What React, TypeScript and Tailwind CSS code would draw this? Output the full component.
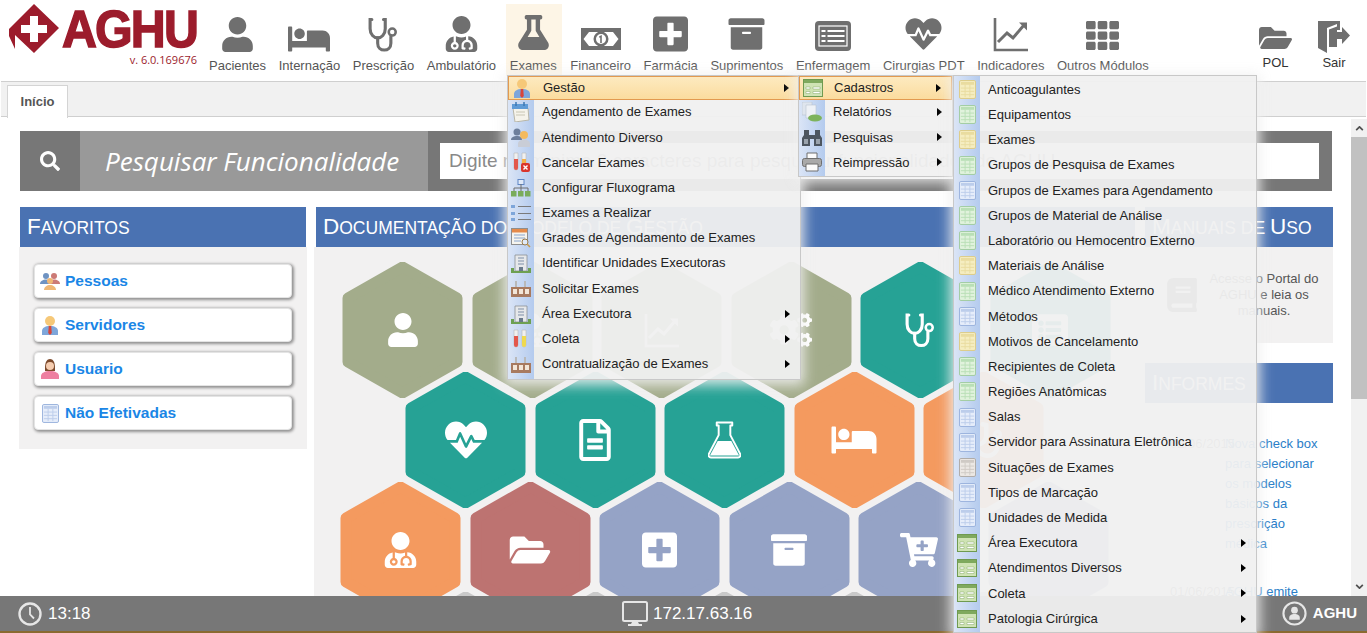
import React from 'react';
import {
  FaUser, FaBed, FaUserMd, FaFlask, FaPlusSquare, FaArchive, FaListAlt, FaHeartbeat, FaTh,
  FaFolderOpen, FaRegFileAlt, FaCartPlus, FaCogs, FaSearch, FaBook, FaStethoscope,
} from 'react-icons/fa';

const GREY = '#6f6f6f';

// ---------- desenhos ----------
const Stethoscope = ({ className = '', color = GREY }: { className?: string; color?: string }) => (
  <svg viewBox="0 0 34 36" className={className} fill="none" stroke={color} strokeWidth="3.2" strokeLinecap="round">
    <path d="M5 2.500H3.200V12c0 6 4 9.500 7.800 9.500s7.800-3.500 7.800-9.500V2.500H17" />
    <path d="M11 21.500V27c0 4.500 3.200 7 6.800 7s6.800-2.500 6.800-7v-7" />
    <circle cx="26" cy="15.500" r="3.600" strokeWidth="2.600" />
  </svg>
);

const Money = ({ className = '' }: { className?: string }) => (
  <svg viewBox="0 0 40 22" className={className}>
    <path fillRule="evenodd" fill={GREY} d="M0 0h40v22H0zM8 4 2.500 11 8 18h24l5.500-7L32 4z" />
    <path fillRule="evenodd" fill={GREY} d="M20 3.500a7.500 7.500 0 1 1 0 15 7.500 7.500 0 0 1 0-15zM20 6a5 5 0 1 0 0 10 5 5 0 0 0 0-10z" />
    <path fill={GREY} d="M18.200 8.200 20.800 7v8h-1.600V9.400l-1 .4z" />
  </svg>
);

const LineChart = ({ className = '', color = GREY }: { className?: string; color?: string }) => (
  <svg viewBox="0 0 36 36" className={className} fill="none" stroke={color}>
    <path d="M2 2v32h33" strokeWidth="2.600" />
    <path d="M5 26l9-9 6 5 11-13" strokeWidth="3" />
    <path d="M26 6.500h8v8z" fill={color} stroke="none" />
  </svg>
);

const ListBox = ({ className = '' }: { className?: string }) => (
  <svg viewBox="0 0 36 30" className={className}>
    <rect x="0" y="0" width="36" height="30" rx="4" fill={GREY} />
    <rect x="4" y="5" width="28" height="20" fill="none" stroke="#fff" strokeWidth="1.200" />
    <path d="M6.500 9h4v2h-4zM6.500 14h4v2h-4zM6.500 19h4v2h-4z" fill="#fff" />
    <path d="M12.500 9h17v2h-17zM12.500 14h17v2h-17zM12.500 19h17v2h-17z" fill="#fff" />
  </svg>
);

const FlaskOutline = ({ className = '' }: { className?: string }) => (
  <svg viewBox="0 0 34 38" className={className}>
    <path d="M9 1h16v3h-2v10l10 19c1 2 0 4-2 4H3c-2 0-3-2-2-4l10-19V4H9z" fill="none" stroke="#fff" strokeWidth="2" strokeLinejoin="round" />
    <path d="M10 20h14l8 15H2z" fill="#fff" />
  </svg>
);

const Door = ({ className = '' }: { className?: string }) => (
  <svg viewBox="0 0 32 32" className={className} fill={GREY}>
    <path d="M0 0h22v9h-3V3L9 7v25L0 27z" />
    <path d="M11 8.500 19 5.500V11h5V6l8 8.500-8 8.500v-5h-5v8h-8z" />
    <path d="M19 18h3v5h-3z" fill="#fff" />
  </svg>
);

const Clock = () => (
  <svg viewBox="0 0 24 26" className="w-6 h-[26px]" fill="none" stroke="#e6e6e6">
    <circle cx="12" cy="13" r="10.500" strokeWidth="2.400" />
    <path d="M12 6v7.500l4 4" strokeWidth="1.800" />
  </svg>
);

const Monitor = () => (
  <svg viewBox="0 0 26 26" className="w-[26px] h-[26px]">
    <rect x="1" y="1" width="24" height="19" rx="1.500" fill="none" stroke="#e6e6e6" strokeWidth="2" />
    <path d="M10 21h6l1 2H9zM6 23h14v2H6z" fill="#e6e6e6" />
  </svg>
);

const UserRound = () => (
  <svg viewBox="0 0 26 26" className="w-[25px] h-[25px]">
    <circle cx="13" cy="13" r="11.500" fill="none" stroke="#e6e6e6" strokeWidth="2.200" />
    <circle cx="13" cy="9.500" r="3.500" fill="#e6e6e6" />
    <path d="M7.500 19.500v-2c0-2.800 2.500-4 5.500-4s5.500 1.200 5.500 4v2z" fill="#e6e6e6" />
  </svg>
);

// Ícones coloridos do menu
const Table = ({ tone }: { tone: 'yellow' | 'green' | 'blue' | 'grey' }) => {
  const c = {
    yellow: ['#dccb85', '#f5edc0', '#e9dc9f'],
    green: ['#9fcb9f', '#e0f2dc', '#b9dfb6'],
    blue: ['#98b0dc', '#e6edfa', '#bccdeb'],
    grey: ['#aca8a4', '#ece8e4', '#cfcac5'],
  }[tone];
  return (
    <svg viewBox="0 0 18 20" className="w-[17px] h-[19px]">
      <rect x="0.500" y="0.500" width="17" height="19" rx="1.500" fill={c[1]} stroke={c[0]} />
      <rect x="2" y="2" width="14" height="3" fill={c[2]} />
      <path d="M2 8.500h14M2 12h14M2 15.500h14M6.500 5v13M11.500 5v13" stroke={c[2]} strokeWidth="1" />
    </svg>
  );
};

const Form = () => (
  <svg viewBox="0 0 20 18" className="w-5 h-[18px]">
    <rect x="0.500" y="0.500" width="19" height="17" fill="#cfe3b4" stroke="#6f9a50" />
    <rect x="1" y="1" width="18" height="3" fill="#7fa95e" />
    <path d="M3 8h4v2H3zM3 12.500h4v2H3zM10 8h7v2h-7zM10 12.500h7v2h-7z" fill="#fff" stroke="#6f9a50" strokeWidth="0.400" />
  </svg>
);

const Servidor = () => (
  <svg viewBox="0 0 18 20" className="w-[18px] h-5">
    <path d="M1 20v-4c0-3 3-5 8-5s8 2 8 5v4z" fill="#7ea6da" />
    <path d="M7.800 11h2.400l.6 7-1.800 2-1.800-2z" fill="#d8453a" />
    <circle cx="9" cy="6" r="5" fill="#f6c878" />
  </svg>
);

const Calendario = () => (
  <svg viewBox="0 0 20 20" className="w-5 h-5">
    <path d="M2 6h15l1 12-14 2z" fill="#f5f3ea" stroke="#b8b6a8" />
    <path d="M1 2h16v5H1z" fill="#5f9bd6" />
    <path d="M5 0v4M13 0v4" stroke="#3d78b2" strokeWidth="1.500" />
    <path d="M5 10h9M5 13h9" stroke="#c9c6b4" />
  </svg>
);

const Atendimento = () => (
  <svg viewBox="0 0 20 20" className="w-5 h-5">
    <circle cx="6" cy="5" r="3.500" fill="#6d7f9c" />
    <path d="M0 13c0-3 3-4 6-4s5 1 5 4z" fill="#6d7f9c" />
    <circle cx="13" cy="8" r="4" fill="#f3ba5e" />
    <path d="M7 20v-3c0-3 3-4.500 6-4.500s6 1.500 6 4.500v3z" fill="#c9cdd6" />
  </svg>
);

const Tubos = ({ x = false }: { x?: boolean }) => (
  <svg viewBox="0 0 20 20" className="w-5 h-5">
    <path d="M3 1h4v15a2 2 0 0 1-4 0z" fill="#f0f0f0" stroke="#b9b9b9" strokeWidth="0.600" />
    <path d="M3 7h4v9a2 2 0 0 1-4 0z" fill="#e2574c" />
    <path d="M11 1h4v15a2 2 0 0 1-4 0z" fill="#f0f0f0" stroke="#b9b9b9" strokeWidth="0.600" />
    <path d="M11 7h4v9a2 2 0 0 1-4 0z" fill={x ? '#f4b04a' : '#efd94f'} />
    {x && <rect x="10" y="11" width="9" height="9" rx="2" fill="#d9352c" />}
    {x && <path d="M12.500 13.500l4 4M16.500 13.500l-4 4" stroke="#fff" strokeWidth="1.400" />}
  </svg>
);

const Fluxo = () => (
  <svg viewBox="0 0 20 18" className="w-5 h-[18px]">
    <rect x="7" y="0.500" width="6" height="5" fill="#dfe9f8" stroke="#5f86c4" />
    <path d="M10 5v4M3 12V9h14v3M10 9v3" fill="none" stroke="#6e6e6e" />
    <path d="M0 12h5.500v5.500H0zM7 12h5.500v5.500H7zM14 12h5.500v5.500H14z" fill="#79ac5c" />
  </svg>
);

const Lista = () => (
  <svg viewBox="0 0 20 18" className="w-5 h-[18px]">
    <path d="M0 1h4v3H0zM0 8h4v3H0zM0 14h4v3H0z" fill="#7ea6da" />
    <path d="M7 2.500h13M7 9.500h13M7 15.500h13" stroke="#7a7a7a" strokeWidth="1.200" />
  </svg>
);

const Grade = () => (
  <svg viewBox="0 0 20 20" className="w-5 h-5">
    <rect x="0.500" y="0.500" width="16" height="16" fill="#f6f4ee" stroke="#8e8e8e" />
    <rect x="1" y="1" width="15" height="3.500" fill="#e58a4a" />
    <path d="M3 7h11M3 10h11M3 13h7" stroke="#8aa6cf" />
    <circle cx="14" cy="14" r="3" fill="#dfeaf8" stroke="#9a7b4a" />
    <path d="M16 16l3 3" stroke="#c59a4f" strokeWidth="1.600" />
  </svg>
);

const Predio = () => (
  <svg viewBox="0 0 20 20" className="w-5 h-5">
    <path d="M4 2h12v16H4z" fill="#e6e8ea" stroke="#8b8f94" strokeWidth="0.800" />
    <path d="M7 5h6M7 8h6M7 11h6" stroke="#7f8fa8" />
    <path d="M8 14h4v4H8z" fill="#6a7a8c" />
    <path d="M0 18h20v2H0zM0 15h3v3H0zM17 15h3v3h-3z" fill="#6ea052" />
  </svg>
);

const Fabrica = () => (
  <svg viewBox="0 0 20 20" className="w-5 h-5">
    <path d="M0 9h20v10H0z" fill="#a87a5f" />
    <path d="M2 11h4v5H2zM8 11h4v5H8zM14 11h4v5h-4z" fill="#f3e6d8" />
    <path d="M4 3h2v6H4zM13 3h2v6h-2z" fill="#b9b9b9" />
  </svg>
);

const Relatorio = () => (
  <svg viewBox="0 0 20 20" className="w-5 h-5">
    <path d="M0 0h10v13H0z" fill="#dfe5ee" stroke="#b9c2d0" strokeWidth="0.600" />
    <path d="M4 3h10v13H4z" fill="#eef1f6" stroke="#b9c2d0" strokeWidth="0.600" />
    <ellipse cx="13" cy="16" rx="7" ry="3.500" fill="#7db35c" />
  </svg>
);

const Binoculo = () => (
  <svg viewBox="0 0 20 18" className="w-5 h-[18px]">
    <path d="M2 2h5v5h6V2h5v5l2 3v8h-8v-7H8v7H0v-8l2-3z" fill="#4d5660" />
    <path d="M2 11h4v5H2zM14 11h4v5h-4z" fill="#9aa3ad" />
  </svg>
);

const Impressora = () => (
  <svg viewBox="0 0 20 20" className="w-5 h-5">
    <path d="M5 1h10v6H5z" fill="#fbfbfb" stroke="#6f6f6f" />
    <rect x="0.500" y="6.500" width="19" height="8" rx="2" fill="#a9a9a9" stroke="#6f6f6f" />
    <path d="M4 12h12v7H4z" fill="#fbfbfb" stroke="#6f6f6f" />
  </svg>
);

const Pessoas = () => (
  <svg viewBox="0 0 20 18" className="w-5 h-[18px]">
    <circle cx="6" cy="4" r="3" fill="#6f93c2" />
    <path d="M0 12c0-3 3-4.500 6-4.500S11 9 11 12z" fill="#6f93c2" />
    <circle cx="14" cy="4" r="3" fill="#cc7a76" />
    <path d="M9 12c0-3 2-4.500 5-4.500s6 1.500 6 4.500z" fill="#cc7a76" />
    <circle cx="10" cy="9" r="3" fill="#f0b774" />
    <path d="M4 18c0-3 3-5 6-5s6 2 6 5z" fill="#f0b774" />
  </svg>
);

const Usuaria = () => (
  <svg viewBox="0 0 18 20" className="w-[18px] h-5">
    <path d="M4 9c0-6 2-9 5-9s5 3 5 9v3H4z" fill="#7d4a2c" />
    <circle cx="9" cy="7" r="4" fill="#f6cdb0" />
    <path d="M0 20v-3c0-3 4-5 9-5s9 2 9 5v3z" fill="#ee7fa0" />
  </svg>
);

// Formas
const Hex = ({ color, icon }: { color: string; icon?: React.ReactNode }) => (
  <div className="relative w-[121px] h-[136px] shrink-0 flex items-center justify-center text-white">
    <svg viewBox="0 0 121 136" className="absolute inset-0 w-full h-full">
      <path d="M60.500 5 115 36v64l-54.500 31L6 100V36z" fill={color} stroke={color} strokeWidth="11" strokeLinejoin="round" />
    </svg>
    <span className="relative">{icon}</span>
  </div>
);

const OLIVE = '#a3ac8b';
const TEAL = '#26a295';
const ORANGE = '#f49a5f';
const ROSE = '#bd7371';
const BLUE = '#95a3c6';

// Versalete com a proporção do original (a do navegador fica pequena demais)
const SectionHeader = ({ title }: { title: string }) => {
  const parts = title.split(/(?=[A-Z])/);
  return (
    <div className="h-10 bg-[#4a72b2] flex items-baseline pt-[7px] px-[7px] text-white whitespace-pre overflow-hidden">
      {parts.map((p, i) => (
        <React.Fragment key={i}>
          <span className="text-[22.500px] leading-[26px]">{p[0]}</span>
          <span className="text-[17.500px] leading-[26px] uppercase">{p.slice(1)}</span>
        </React.Fragment>
      ))}
    </div>
  );
};

const favoritos = [
  { label: 'Pessoas', icon: <Pessoas /> },
  { label: 'Servidores', icon: <Servidor /> },
  { label: 'Usuario', icon: <Usuaria /> },
  { label: 'Não Efetivadas', icon: <Table tone="blue" /> },
];

const navItems = [
  { label: 'Pacientes', icon: <FaUser className="w-[33px] h-[35px]" /> },
  { label: 'Internação', icon: <FaBed className="w-[42px] h-[34px] -mb-[4px]" /> },
  { label: 'Prescrição', icon: <Stethoscope className="w-[33px] h-[35px]" /> },
  { label: 'Ambulatório', icon: <FaUserMd className="w-[33px] h-9" /> },
  { label: 'Exames', icon: <FaFlask className="w-[33px] h-[35px] mb-[2px]" />, active: true },
  { label: 'Financeiro', icon: <Money className="w-10 h-[22px] mb-[2px]" /> },
  { label: 'Farmácia', icon: <FaPlusSquare className="w-[35px] h-[40px] -mb-[2px]" /> },
  { label: 'Suprimentos', icon: <FaArchive className="w-[39px] h-[36px]" /> },
  { label: 'Enfermagem', icon: <ListBox className="w-9 h-[30px] mb-[1px]" /> },
  { label: 'Cirurgias PDT', icon: <FaHeartbeat className="w-[37px] h-[36px]" /> },
  { label: 'Indicadores', icon: <LineChart className="w-9 h-[36px]" /> },
  { label: 'Outros Módulos', icon: <FaTh className="w-[33px] h-[37px] -mb-[2px]" /> },
];

type Row = { label: string; icon: React.ReactNode; sub?: boolean; on?: boolean };

const menuExames: Row[] = [
  { label: 'Gestão', icon: <Servidor />, sub: true, on: true },
  { label: 'Agendamento de Exames', icon: <Calendario /> },
  { label: 'Atendimento Diverso', icon: <Atendimento /> },
  { label: 'Cancelar Exames', icon: <Tubos x /> },
  { label: 'Configurar Fluxograma', icon: <Fluxo /> },
  { label: 'Exames a Realizar', icon: <Lista /> },
  { label: 'Grades de Agendamento de Exames', icon: <Grade /> },
  { label: 'Identificar Unidades Executoras', icon: <Predio /> },
  { label: 'Solicitar Exames', icon: <Fabrica /> },
  { label: 'Área Executora', icon: <Predio />, sub: true },
  { label: 'Coleta', icon: <Tubos />, sub: true },
  { label: 'Contratualização de Exames', icon: <Fabrica />, sub: true },
];

const menuGestao: Row[] = [
  { label: 'Cadastros', icon: <Form />, sub: true, on: true },
  { label: 'Relatórios', icon: <Relatorio />, sub: true },
  { label: 'Pesquisas', icon: <Binoculo />, sub: true },
  { label: 'Reimpressão', icon: <Impressora />, sub: true },
];

const menuCadastros: Row[] = [
  { label: 'Anticoagulantes', icon: <Table tone="yellow" /> },
  { label: 'Equipamentos', icon: <Table tone="green" /> },
  { label: 'Exames', icon: <Table tone="yellow" /> },
  { label: 'Grupos de Pesquisa de Exames', icon: <Table tone="green" /> },
  { label: 'Grupos de Exames para Agendamento', icon: <Table tone="blue" /> },
  { label: 'Grupos de Material de Análise', icon: <Table tone="green" /> },
  { label: 'Laboratório ou Hemocentro Externo', icon: <Table tone="green" /> },
  { label: 'Materiais de Análise', icon: <Table tone="yellow" /> },
  { label: 'Médico Atendimento Externo', icon: <Table tone="green" /> },
  { label: 'Métodos', icon: <Table tone="blue" /> },
  { label: 'Motivos de Cancelamento', icon: <Table tone="yellow" /> },
  { label: 'Recipientes de Coleta', icon: <Table tone="green" /> },
  { label: 'Regiões Anatômicas', icon: <Table tone="green" /> },
  { label: 'Salas', icon: <Table tone="blue" /> },
  { label: 'Servidor para Assinatura Eletrônica', icon: <Table tone="blue" /> },
  { label: 'Situações de Exames', icon: <Table tone="grey" /> },
  { label: 'Tipos de Marcação', icon: <Table tone="blue" /> },
  { label: 'Unidades de Medida', icon: <Table tone="blue" /> },
  { label: 'Área Executora', icon: <Form />, sub: true },
  { label: 'Atendimentos Diversos', icon: <Form />, sub: true },
  { label: 'Coleta', icon: <Form />, sub: true },
  { label: 'Patologia Cirúrgica', icon: <Form />, sub: true },
];

const MenuRow = ({ row }: { row: Row }) => (
  <div
    className={`relative flex items-center text-[13px] text-[#222] whitespace-nowrap ${row.on ? 'h-[23.500px] border border-[#e29a50] bg-gradient-to-b from-[#fdeac0] to-[#fbdc9e]' : 'h-[25.200px]'}`}
  >
    <span className="w-[26px] shrink-0 flex items-center justify-center">{row.icon}</span>
    <span className="ml-2 flex-1">{row.label}</span>
    {row.sub && <span className="mr-[10px] w-0 h-0 border-y-[4.500px] border-y-transparent border-l-[5px] border-l-black" />}
  </div>
);

const Menu = ({ rows, className }: { rows: Row[]; className: string }) => (
  <div className={`absolute top-[75px] border border-[#c8c8c8] bg-[#f0f0f0]/[.95] shadow-[0_2px_12px_3px_rgba(240,240,240,0.9)] ${className}`}>
    <div className="absolute left-0 top-0 bottom-0 w-[26px] bg-gradient-to-r from-[#dbe5f6] to-[#b4cbee]" />
    <div className="relative">
      {rows.map((r) => (
        <MenuRow key={r.label} row={r} />
      ))}
    </div>
  </div>
);

export default function App() {
  return (
    <div className="relative h-screen w-full overflow-hidden bg-white flex flex-col font-['Liberation_Sans',Arial,sans-serif]">
      {/* Cabeçalho */}
      <header className="h-[81px] shrink-0 flex items-start">
        <div className="w-[209px] shrink-0 pl-[9px] pt-[4px]">
          <div className="flex items-center">
            <svg viewBox="0 0 50 50" className="w-[50px] h-[50px] shrink-0">
              <path fillRule="evenodd" fill="#9c1c2c" d="M25 0 50 24 25 49 6 31v14L0 32V25zM21 12v9h-9v8h9v9h8v-9h9v-8h-9v-9z" />
            </svg>
            <span className="ml-[3px] text-[52px] leading-[50px] font-bold text-[#9c1c2c] tracking-[-2px] origin-left scale-x-[0.93] [-webkit-text-stroke:1.500px_#9c1c2c]">AGHU</span>
          </div>
          <div className="mt-[-1px] pr-[12px] text-right text-[11px] leading-[14px] text-[#9c1c2c] font-['Open_Sans',sans-serif]">v. 6.0.169676</div>
        </div>
        <nav className="flex-1 flex gap-[12.600px] text-[13px] text-[#555]">
          {navItems.map((n) => (
            <div key={n.label} className={`relative flex flex-col items-center ${n.active ? 'min-w-[49px]' : ''}`}>
              {n.active && <div className="absolute -left-[3px] -right-[4px] top-[4px] h-[72px] bg-[#fdf5e6]" />}
              <div className="relative h-[52px] flex items-end justify-center" style={{ color: GREY }}>{n.icon}</div>
              <span className="relative mt-[6px] leading-[16px] whitespace-nowrap">{n.label}</span>
            </div>
          ))}
        </nav>
        <div className="flex text-[13px] text-[#333] pr-[17px] gap-[26px]">
          <div className="w-[33px] flex flex-col items-center">
            <div className="h-[53px] flex items-end" style={{ color: GREY }}><FaFolderOpen className="w-[33px] h-[30px]" /></div>
            <span className="mt-[2px] leading-4">POL</span>
          </div>
          <div className="w-8 flex flex-col items-center">
            <div className="h-[53px] flex items-end"><Door className="w-8 h-8" /></div>
            <span className="mt-[2px] leading-4">Sair</span>
          </div>
        </div>
      </header>

      {/* Abas */}
      <div className="h-[36px] shrink-0 mx-px bg-[#f1f1f1] border-y border-[#cfcfcf] px-[6px] pt-[3px] flex">
        <div className="h-[33px] w-[61px] bg-white border border-b-0 border-[#d4d4d4] flex items-center justify-center text-[13px] font-bold text-[#555]">Início</div>
      </div>

      {/* Conteúdo */}
      <main className="flex-1 min-h-0 flex">
        <div className="flex-1 min-w-0 overflow-hidden pl-5 pr-[19px] pt-[14px]">
          <div className="h-[60px] flex bg-[#777]">
            <div className="w-[60px] flex items-center justify-center text-white"><FaSearch className="w-5 h-5" /></div>
            <div className="w-[348px] bg-[#999] flex items-center pl-[25px] text-white italic text-[26px] font-['Open_Sans',sans-serif] whitespace-nowrap">Pesquisar Funcionalidade</div>
            <div className="flex-1 pl-[12px] pr-[13px] py-3">
              <div className="h-9 bg-white flex items-center pl-[9px] text-[19px] text-[#888] whitespace-nowrap overflow-hidden">Digite no mínimo 3 caracteres para pesquisar funcionalidades do AGHU</div>
            </div>
          </div>

          <div className="mt-4 flex gap-[10px]">
            <section className="w-[286px] shrink-0 h-fit">
              <SectionHeader title="Favoritos" />
              <div className="-mx-px bg-[#f2f1f1] pt-[17px] pb-[19px] px-[15px] flex flex-col gap-[10px]">
                {favoritos.map((f) => (
                  <div key={f.label} className="h-[34px] rounded-[4px] bg-white border border-[#e4e4e4] shadow-[1px_1px_3px_1px_rgba(0,0,0,0.4)] flex items-center pl-[5px] gap-[5px] text-[15.500px] font-bold text-[#1a86e6]">
                    <span className="w-5 flex justify-center">{f.icon}</span>
                    <span>{f.label}</span>
                  </div>
                ))}
              </div>
            </section>

            <section className="w-[819px] shrink-0">
              <SectionHeader title="Documentação do Modelo de Gestão" />
              <div className="-ml-[2px] bg-[#f2f1f1] h-[360px] pt-[15px] pl-[28px] overflow-hidden">
                <div className="flex gap-[8.500px]">
                  <Hex color={OLIVE} icon={<FaUser className="w-[32px] h-[34px]" />} />
                  <Hex color={OLIVE} icon={<FaUserMd className="w-[32px] h-[34px]" />} />
                  <Hex color={OLIVE} icon={<LineChart className="w-9 h-9" color="#fff" />} />
                  <Hex color={OLIVE} icon={<FaCogs className="w-[42px] h-[36px]" />} />
                  <Hex color={TEAL} icon={<Stethoscope className="w-[33px] h-[36px]" color="#fff" />} />
                  <Hex color={TEAL} icon={<FaListAlt className="w-9 h-9" />} />
                </div>
                <div className="flex gap-[8.500px] -mt-[26px] ml-[63px]">
                  <Hex color={TEAL} icon={<FaHeartbeat className="w-[42px] h-[42px]" />} />
                  <Hex color={TEAL} icon={<FaRegFileAlt className="w-[36px] h-[42px]" />} />
                  <Hex color={TEAL} icon={<FlaskOutline className="w-[33px] h-[38px]" />} />
                  <Hex color={ORANGE} icon={<FaBed className="w-[46px] h-[36px]" />} />
                  <Hex color={ORANGE} icon={<FaStethoscope className="w-9 h-9" />} />
                </div>
                <div className="flex gap-[8.500px] -mt-[26px] -ml-[2px]">
                  <Hex color={ORANGE} icon={<FaUserMd className="w-[33px] h-[36px]" />} />
                  <Hex color={ROSE} icon={<FaFolderOpen className="w-[44px] h-[36px]" />} />
                  <Hex color={BLUE} icon={<FaPlusSquare className="w-[35px] h-[40px]" />} />
                  <Hex color={BLUE} icon={<FaArchive className="w-[38px] h-[36px]" />} />
                  <Hex color={BLUE} icon={<FaCartPlus className="w-[38px] h-[34px]" />} />
                  <Hex color={BLUE} />
                </div>
                <div className="flex gap-[8.500px] -mt-[26px] ml-[63px]">
                  {[0, 1, 2, 3, 4].map((i) => <Hex key={i} color="#c9c9c9" />)}
                </div>
              </div>
            </section>

            <aside className="w-[188px] shrink-0">
              <SectionHeader title="Manuais de Uso" />
              <div className="h-[96px] bg-[#f2f1f1] flex items-center pl-[20px] pr-[12px] text-[13px] text-[#555] leading-4">
                <FaBook className="w-[34px] h-[34px] shrink-0 text-[#666]" />
                <p className="ml-[8px] text-center">Acesse o Portal do AGHU e leia os manuais.</p>
              </div>
              <div className="mt-[20px]"><SectionHeader title="Informes" /></div>
              <div className="pt-[31px] pl-[25px] text-[13px] leading-[20px] text-[#777]">
                <div className="flex">
                  <span className="w-[55px] shrink-0 whitespace-nowrap">02/06/2015</span>
                  <a className="w-[96px] text-[#2a7ec8]">Nova check box para selecionar os modelos básicos da prescrição médica</a>
                </div>
                <div className="flex mt-[28px]">
                  <span className="w-[55px] shrink-0 whitespace-nowrap">01/06/2015</span>
                  <a className="text-[#2a7ec8] whitespace-nowrap">AGHU emite</a>
                </div>
              </div>
            </aside>
          </div>
        </div>

        {/* Barra de rolagem */}
        <div className="w-4 shrink-0 mt-[2px] bg-[#f1f1f1] flex flex-col items-center">
          <svg viewBox="0 0 10 6" className="w-[9px] h-[5px] mt-[7px] mb-[6px]"><path d="M1 5l4-4 4 4" fill="none" stroke="#505050" strokeWidth="2" /></svg>
          <div className="w-full h-[262px] bg-[#c1c1c1]" />
          <div className="flex-1" />
          <svg viewBox="0 0 10 6" className="w-[9px] h-[5px] mb-[7px]"><path d="M1 1l4 4 4-4" fill="none" stroke="#505050" strokeWidth="2" /></svg>
        </div>
      </main>

      {/* Rodapé */}
      <footer className="h-[37px] shrink-0 bg-[#777] border-b-2 border-[#8a6a30] flex items-center text-white text-[17px] pr-[10px]">
        <div className="w-[604px] shrink-0 flex items-center gap-[6px] pl-[18px]"><Clock />13:18</div>
        <div className="flex items-center gap-[5px] ml-[18px]"><Monitor />172.17.63.16</div>
        <div className="ml-auto flex items-center gap-[6px] font-bold text-[15px]"><UserRound />AGHU</div>
      </footer>

      {/* Menus abertos */}
      <Menu rows={menuExames} className="left-[507px] w-[294px] pb-[2px]" />
      <Menu rows={menuGestao} className="left-[798px] w-[155px] pb-[1px]" />
      <Menu rows={menuCadastros} className="left-[953px] w-[304px] h-[558px] pt-[1px]" />
    </div>
  );
}
